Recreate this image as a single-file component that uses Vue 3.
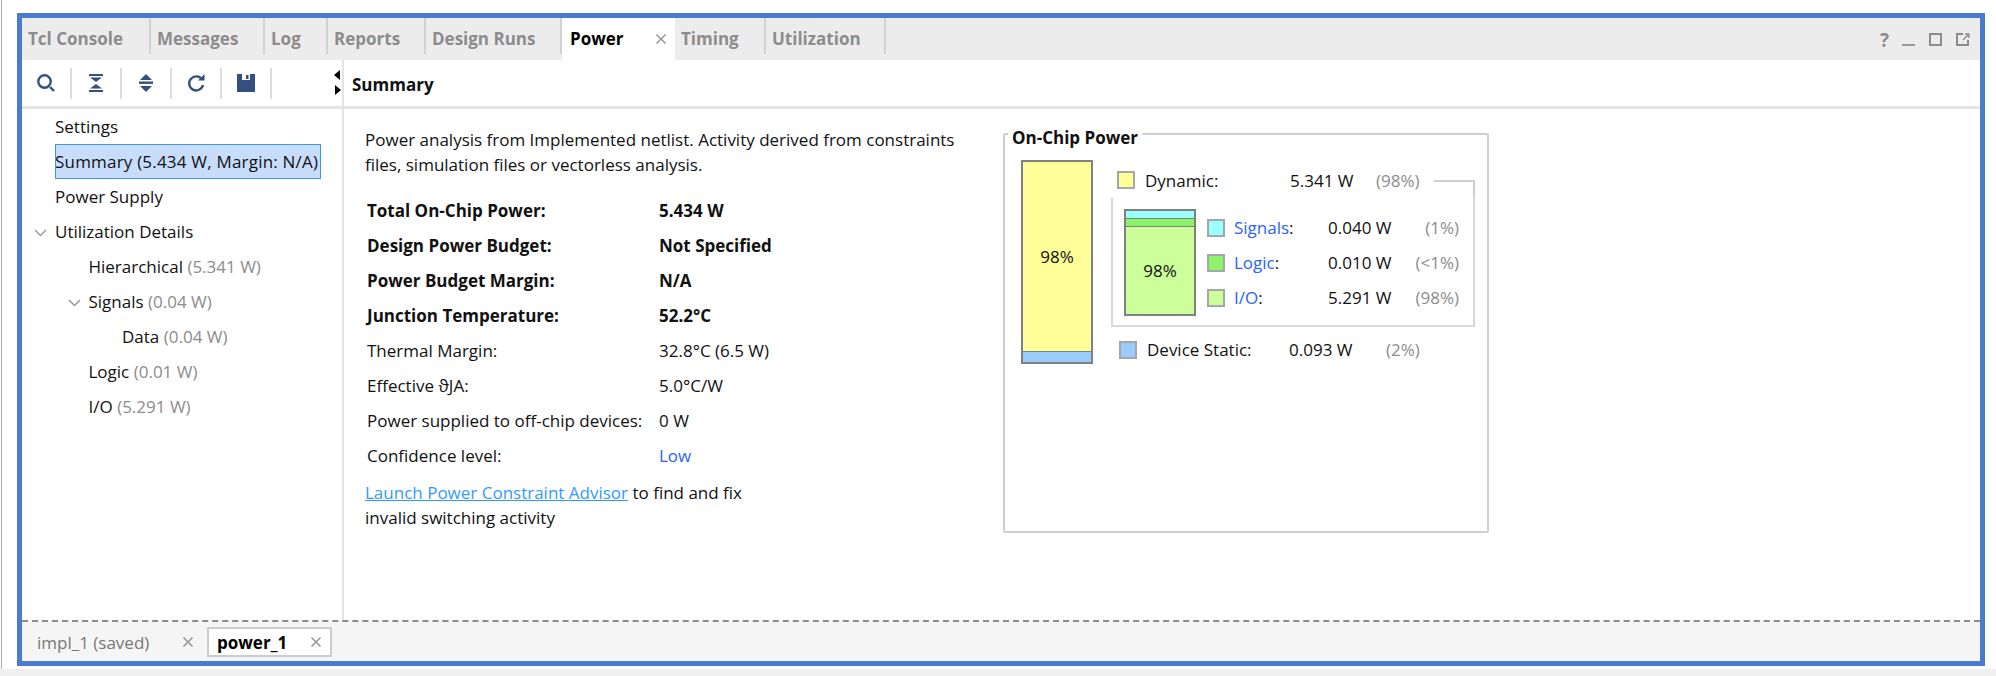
<script setup>
const tabs = [
  { name: 'Tcl Console', w: 129 },
  { name: 'Messages', w: 114 },
  { name: 'Log', w: 63 },
  { name: 'Reports', w: 98 },
  { name: 'Design Runs', w: 136 },
  { name: 'Power', w: 113, active: true },
  { name: 'Timing', w: 91 },
  { name: 'Utilization', w: 120 },
];

const tree = [
  { text: 'Settings', depth: 0 },
  { text: 'Summary (5.434 W, Margin: N/A)', depth: 0, selected: true },
  { text: 'Power Supply', depth: 0 },
  { text: 'Utilization Details', depth: 0, open: true },
  { text: 'Hierarchical', note: '(5.341 W)', depth: 1 },
  { text: 'Signals', note: '(0.04 W)', depth: 1, open: true },
  { text: 'Data', note: '(0.04 W)', depth: 2 },
  { text: 'Logic', note: '(0.01 W)', depth: 1 },
  { text: 'I/O', note: '(5.291 W)', depth: 1 },
];

const stats = [
  { label: 'Total On-Chip Power:', value: '5.434 W', bold: true },
  { label: 'Design Power Budget:', value: 'Not Specified', bold: true },
  { label: 'Power Budget Margin:', value: 'N/A', bold: true },
  { label: 'Junction Temperature:', value: '52.2°C', bold: true },
  { label: 'Thermal Margin:', value: '32.8°C (6.5 W)' },
  { label: 'Effective ϑJA:', value: '5.0°C/W' },
  { label: 'Power supplied to off-chip devices:', value: '0 W' },
  { label: 'Confidence level:', value: 'Low', link: true },
];

const breakdown = [
  { name: 'Signals', value: '0.040 W', pct: '(1%)', color: '#99ffff' },
  { name: 'Logic', value: '0.010 W', pct: '(<1%)', color: '#8cf26c' },
  { name: 'I/O', value: '5.291 W', pct: '(98%)', color: '#ccff99' },
];
</script>

<template>
  <div class="page">
    <div class="frame">
      <div class="tabbar">
        <div
          v-for="t in tabs"
          :key="t.name"
          class="tab"
          :class="{ active: t.active }"
          :style="{ width: t.w + 'px' }"
        >
          <span>{{ t.name }}</span>
          <svg v-if="t.active" class="tab-x" width="12" height="12" viewBox="0 0 12 12">
            <path d="M1.5 1.5l9 9M10.5 1.5l-9 9" stroke="#999" stroke-width="1.6" fill="none" />
          </svg>
        </div>
        <div class="win-icons">
          <span class="help">?</span>
          <svg width="14" height="14" viewBox="0 0 14 14"><rect x="0" y="11" width="13" height="2" fill="#999" /></svg>
          <svg width="14" height="14" viewBox="0 0 14 14"><rect x="1" y="1" width="11" height="11" fill="none" stroke="#8c8c8c" stroke-width="2" /></svg>
          <svg width="14" height="14" viewBox="0 0 14 14">
            <path d="M7 1H1v11h11V7" fill="none" stroke="#8c8c8c" stroke-width="2" />
            <path d="M7 7l5-5M9 1h4v4" fill="none" stroke="#8c8c8c" stroke-width="1.4" />
          </svg>
        </div>
      </div>

      <div class="body">
        <aside class="side">
          <div class="toolbar">
            <div class="tool">
              <svg width="20" height="20" viewBox="0 0 20 20">
                <circle cx="8.5" cy="8.5" r="6.2" fill="none" stroke="#34507f" stroke-width="2.4" />
                <path d="M14 14l4 4" stroke="#34507f" stroke-width="2.4" />
              </svg>
            </div>
            <div class="tool">
              <svg width="18" height="20" viewBox="0 0 18 20" fill="#34507f">
                <rect x="2" y="1" width="14" height="2" />
                <path d="M3 4.5h12L9 9z" />
                <path d="M9 11l6 4.5H3z" />
                <rect x="2" y="17" width="14" height="2" />
              </svg>
            </div>
            <div class="tool">
              <svg width="18" height="20" viewBox="0 0 18 20" fill="#34507f">
                <path d="M9 1l6 6H3z" />
                <rect x="2" y="8.5" width="14" height="2.4" />
                <path d="M3 13h12l-6 6z" />
              </svg>
            </div>
            <div class="tool">
              <svg width="20" height="20" viewBox="0 0 20 20">
                <path d="M16 6.5A7 7 0 1 0 17 12" fill="none" stroke="#34507f" stroke-width="2.4" />
                <path d="M12 7.5h6.5V1z" fill="#34507f" />
              </svg>
            </div>
            <div class="tool">
              <svg width="18" height="18" viewBox="0 0 18 18">
                <path d="M0 0h18v18H0z" fill="#34507f" />
                <rect x="5" y="0" width="8" height="6" fill="#fff" />
                <rect x="9" y="1" width="2.5" height="4" fill="#34507f" />
              </svg>
            </div>
            <svg class="grip" width="7" height="26" viewBox="0 0 7 26" fill="#000">
              <path d="M6 0v10L0 5z" />
              <path d="M1 15l6 5-6 5z" />
            </svg>
          </div>
          <ul class="tree">
            <li
              v-for="n in tree"
              :key="n.text"
              class="node"
              :style="{ paddingLeft: 33 + n.depth * 33.5 + 'px' }"
            >
              <svg v-if="n.open" class="caret" width="13" height="8" viewBox="0 0 13 8">
                <path d="M1 1l5.5 5.5L12 1" fill="none" stroke="#999" stroke-width="1.5" />
              </svg>
              <span :class="{ selected: n.selected }">{{ n.text }}<span v-if="n.note" class="muted">{{ ' ' + n.note }}</span></span>
            </li>
          </ul>
        </aside>

        <main class="main">
          <div class="heading">Summary</div>
          <div class="content">
            <div class="report">
              <p class="intro">Power analysis from Implemented netlist. Activity derived from constraints<br />files, simulation files or vectorless analysis.</p>
              <div class="stats">
                <template v-for="s in stats" :key="s.label">
                  <div :class="{ strong: s.bold }">{{ s.label }}</div>
                  <div :class="{ strong: s.bold, blue: s.link }">{{ s.value }}</div>
                </template>
              </div>
              <p class="advisor"><a class="link">Launch Power Constraint Advisor</a> to find and fix<br />invalid switching activity</p>
            </div>

            <section class="chart">
              <div class="legend">On-Chip Power</div>
              <div class="bar big">
                <div class="seg grow yellow">98%</div>
                <div class="seg static"></div>
              </div>
              <div class="details">
                <div class="row dynamic">
                  <i class="swatch" style="background: #ffff99"></i>
                  <span class="name">Dynamic:</span>
                  <span class="val">5.341 W</span>
                  <span class="pct">(98%)</span>
                  <span class="connector"></span>
                </div>
                <div class="subbox">
                  <div class="bar small">
                    <div class="seg s1"></div>
                    <div class="seg s2"></div>
                    <div class="seg grow lime">98%</div>
                  </div>
                  <div class="subrows">
                    <div v-for="b in breakdown" :key="b.name" class="subrow">
                      <i class="swatch" :style="{ background: b.color }"></i>
                      <span class="subname"><span class="blue">{{ b.name }}</span>:</span>
                      <span class="subval">{{ b.value }}</span>
                      <span class="subpct">{{ b.pct }}</span>
                    </div>
                  </div>
                </div>
                <div class="row device">
                  <i class="swatch" style="background: #99ccff"></i>
                  <span class="name dev">Device Static:</span>
                  <span class="val">0.093 W</span>
                  <span class="pct dev">(2%)</span>
                </div>
              </div>
            </section>
          </div>
        </main>
      </div>

      <div class="footer">
        <div class="run">
          <span>impl_1 (saved)</span>
          <svg width="12" height="12" viewBox="0 0 12 12"><path d="M1.5 1.5l9 9M10.5 1.5l-9 9" stroke="#999" stroke-width="1.6" /></svg>
        </div>
        <div class="run current">
          <span>power_1</span>
          <svg width="12" height="12" viewBox="0 0 12 12"><path d="M1.5 1.5l9 9M10.5 1.5l-9 9" stroke="#999" stroke-width="1.6" /></svg>
        </div>
      </div>
    </div>
  </div>
</template>

<style>
html, body {
  background: #fff;
}
</style>

<style scoped>
.page {
  width: 1996px;
  height: 676px;
  box-sizing: border-box;
  padding: 13px 11px 0 17px;
  background: linear-gradient(#fff, #fff) no-repeat 0 0 / 100% 669px, #f0f0f0;
  font-family: "Open Sans", "Noto Sans", sans-serif;
  font-size: 17px;
  color: #111;
  position: relative;
}
.page::before {
  content: "";
  position: absolute;
  left: 1px;
  top: 0;
  width: 1px;
  height: 669px;
  background: #aaa;
}
.frame {
  width: 1968px;
  height: 653px;
  box-sizing: border-box;
  border: 5px solid #4a7ccd;
  display: flex;
  flex-direction: column;
  background: #fff;
}
.tabbar {
  height: 42px;
  flex: none;
  background: #ececec;
  display: flex;
}
.tab {
  box-sizing: border-box;
  height: 36px;
  padding: 10px 0 0 6px;
  line-height: 22px;
  border-right: 2px solid #d2d2d2;
  font-weight: 700;
  color: #8c8c8c;
  white-space: nowrap;
  display: flex;
}
.tab.active {
  height: 42px;
  background: #fff;
  color: #000;
  border-right: 0;
  padding-left: 8px;
  justify-content: space-between;
}
.tab-x {
  margin: 5px 8px 0 0;
}
.win-icons {
  margin-left: auto;
  margin-right: 10px;
  display: flex;
  gap: 13px;
  padding-top: 15px;
}
.help {
  font-weight: 700;
  font-size: 19px;
  line-height: 15px;
  color: #8c8c8c;
}
.body {
  flex: 1;
  min-height: 0;
  display: flex;
}
.side {
  width: 322px;
  box-sizing: border-box;
  flex: none;
  border-right: 2px solid #e4e4e4;
}
.toolbar {
  height: 49px;
  box-sizing: border-box;
  border-bottom: 3px solid #e4e4e4;
  display: flex;
  align-items: center;
  position: relative;
}
.tool {
  width: 50px;
  height: 31px;
  box-sizing: border-box;
  border-right: 2px solid #ddd;
  display: flex;
  align-items: center;
  justify-content: center;
}
.grip {
  position: absolute;
  right: 1px;
  top: 10px;
}
.tree {
  list-style: none;
  margin: 0;
  padding: 0;
}
.node {
  height: 35px;
  line-height: 36px;
  white-space: nowrap;
  position: relative;
  display: flex;
}
.caret {
  position: absolute;
  margin-left: -21px;
  margin-top: 15px;
}
.selected {
  width: 266px;
  height: 35px;
  box-sizing: border-box;
  letter-spacing: 0.2px;
  background: #c8dcfc;
  outline: 1px solid #3c9ad8;
  outline-offset: -1px;
}
.muted {
  color: #8c8c8c;
}
.main {
  flex: 1;
  min-width: 0;
}
.heading {
  height: 49px;
  box-sizing: border-box;
  border-bottom: 3px solid #e4e4e4;
  padding: 14px 0 0 8px;
  font-weight: 700;
  line-height: 22px;
}
.content {
  display: flex;
  align-items: flex-start;
  padding: 18px 0 0 21px;
}
.report {
  width: 638px;
  flex: none;
}
.intro {
  margin: 0;
  line-height: 25px;
  white-space: nowrap;
}
.stats {
  display: grid;
  grid-template-columns: 292px 1fr;
  grid-auto-rows: 35px;
  align-items: center;
  margin: 16px 0 0 2px;
}
.strong {
  font-weight: 700;
}
.blue {
  color: #2962ff;
}
.advisor {
  margin: 7px 0 0;
  line-height: 25px;
}
.link {
  color: #3399ff;
  text-decoration: underline;
}
.chart {
  margin-top: 6px;
  width: 486px;
  height: 400px;
  box-sizing: border-box;
  border: 2px solid #cfcfcf;
  border-radius: 2px;
  display: flex;
  align-items: flex-start;
  padding: 25px 0 0 16px;
  position: relative;
}
.legend {
  position: absolute;
  left: 3px;
  top: -9px;
  padding: 0 4px;
  background: #fff;
  font-weight: 700;
  line-height: 24px;
}
.bar {
  border: 2px solid #808080;
  box-sizing: border-box;
  display: flex;
  flex-direction: column;
  flex: none;
}
.bar.big {
  width: 72px;
  height: 204px;
}
.bar.small {
  width: 72px;
  height: 107px;
}
.seg.grow {
  flex: 1;
  display: flex;
  align-items: center;
  justify-content: center;
}
.yellow {
  background: #ffff99;
}
.static {
  height: 10px;
  background: #99ccff;
  border-top: 1px solid #808080;
}
.s1 {
  height: 7px;
  background: #99ffff;
}
.s2 {
  height: 7px;
  background: #8cf26c;
  border-top: 1px solid #808080;
  border-bottom: 1px solid #808080;
}
.lime {
  background: #ccff99;
}
.details {
  width: 364px;
  margin-left: 18px;
  flex: none;
}
.row {
  display: flex;
  height: 27px;
}
.swatch {
  width: 18px;
  height: 18px;
  box-sizing: border-box;
  border: 2px solid #a6a6a6;
  flex: none;
}
.dynamic {
  margin-top: 11px;
  padding-left: 6px;
  line-height: 20px;
  align-items: flex-start;
}
.name {
  width: 145px;
  margin-left: 10px;
}
.val {
  width: 86px;
  white-space: nowrap;
}
.pct {
  color: #8c8c8c;
}
.connector {
  margin-left: auto;
  margin-top: 9px;
  width: 41px;
  height: 18px;
  box-sizing: border-box;
  border-top: 2px solid #cfcfcf;
  border-right: 2px solid #cfcfcf;
}
.subbox {
  height: 129px;
  box-sizing: border-box;
  border: 2px solid #d8d8d8;
  border-top: 0;
  display: flex;
  padding: 11px 0 0 11px;
}
.subrows {
  margin-left: 11px;
  padding-top: 1px;
}
.subrow {
  display: flex;
  align-items: center;
  height: 35px;
}
.subname {
  width: 94px;
  margin-left: 9px;
}
.subval {
  width: 70px;
  white-space: nowrap;
}
.subpct {
  width: 61px;
  text-align: right;
  color: #8c8c8c;
  white-space: nowrap;
}
.device {
  margin-top: 9px;
  padding-left: 8px;
  align-items: center;
}
.name.dev {
  width: 142px;
}
.pct.dev {
  margin-left: 11px;
}
.footer {
  height: 41px;
  flex: none;
  box-sizing: border-box;
  border-top: 2px dashed #8c8c8c;
  background: #f5f5f5;
  display: flex;
  align-items: flex-start;
  padding-left: 15px;
  padding-top: 5px;
  gap: 13px;
}
.run {
  width: 157px;
  height: 30px;
  display: flex;
  align-items: center;
  justify-content: space-between;
  color: #777;
}
.run.current {
  box-sizing: border-box;
  width: 125px;
  background: #fff;
  border: 2px solid #ccc;
  padding: 0 8px 0 8px;
  font-weight: 700;
  color: #000;
}
</style>
